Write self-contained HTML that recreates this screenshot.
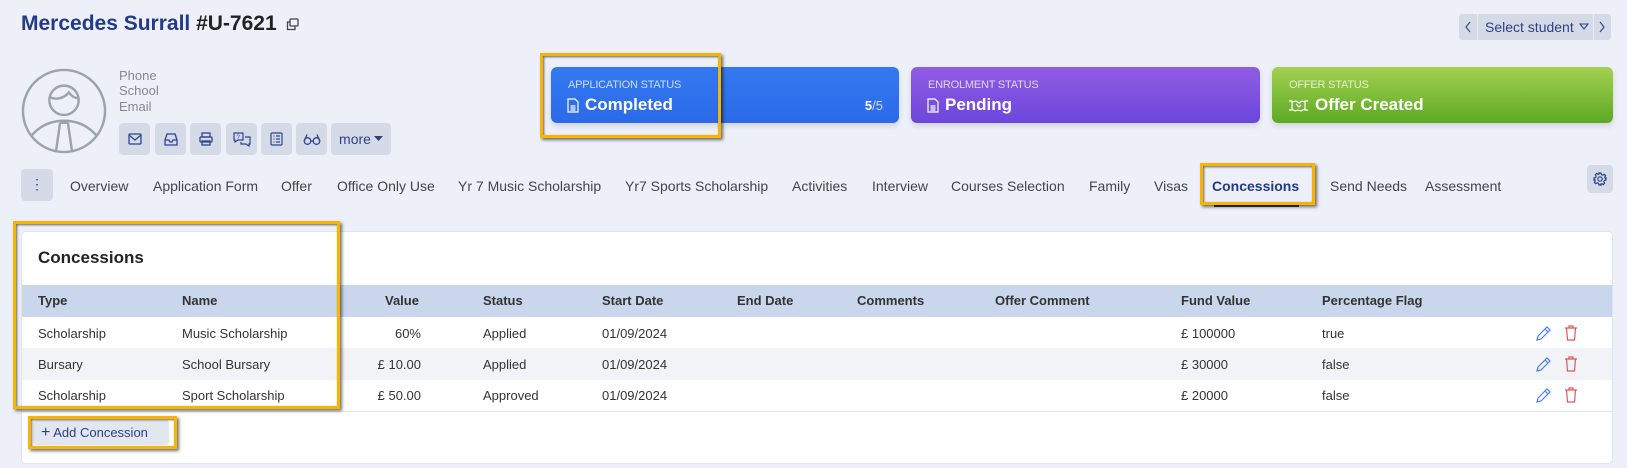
<!DOCTYPE html>
<html><head><meta charset="utf-8"><style>
*{box-sizing:border-box;margin:0;padding:0}
body{width:1627px;height:468px;background:#edf0f8;font-family:"Liberation Sans",Arial,sans-serif;position:relative;overflow:hidden;color:#333}
.a{position:absolute}
.title{left:21px;top:12px;font-size:21px;font-weight:bold;color:#233a86;white-space:nowrap}
.title span{color:#222}
.info{left:119px;font-size:13px;color:#888}
.btn{top:123px;height:32px;width:31px;background:#d5dbe6;border-radius:4px;display:flex;align-items:center;justify-content:center}
.card{top:67px;height:56px;border-radius:6px;color:#fff;box-shadow:0 3px 6px rgba(0,0,0,.12)}
.card .lab{position:absolute;top:12px;font-size:11px;opacity:.75;letter-spacing:-.2px}
.card .val{position:absolute;top:28px;font-size:17px;font-weight:bold;display:flex;align-items:center;gap:6px}
.tab{top:178px;font-size:14px;color:#444;white-space:nowrap}
.yb{border:3px solid #f8b400;box-shadow:2px 2px 3px rgba(0,0,0,.55),inset 1px 1px 2px rgba(0,0,0,.6)}
.th{top:293px;font-size:13px;font-weight:bold;color:#333}
.td{font-size:13px;color:#333;white-space:nowrap}
</style></head><body>
<div class="a title">Mercedes Surrall <span>#U-7621</span></div>
<svg class="a" style="left:286px;top:18px" width="13" height="13" viewBox="0 0 13 13" fill="none" stroke="#444" stroke-width="1.3"><rect x="4" y="1" width="8" height="7" rx="1"/><path d="M4 4H1.5v7.5H9V8"/></svg>

<div class="a" style="left:1459px;top:14px;width:152px;height:26px;background:#d5dbe6;border-radius:3px"></div>
<div class="a" style="left:1477px;top:14px;width:1px;height:26px;background:#e8ecf3"></div>
<div class="a" style="left:1593px;top:14px;width:1px;height:26px;background:#e8ecf3"></div>
<svg class="a" style="left:1464px;top:20px" width="8" height="14" viewBox="0 0 8 14"><path d="M6 2L2 7l4 5" fill="none" stroke="#3a4a8a" stroke-width="1.2"/></svg>
<svg class="a" style="left:1598px;top:20px" width="8" height="14" viewBox="0 0 8 14"><path d="M2 2l4 5-4 5" fill="none" stroke="#3a4a8a" stroke-width="1.2"/></svg>
<div class="a" style="left:1485px;top:19px;font-size:14px;color:#2f3f86">Select student</div>
<svg class="a" style="left:1579px;top:23px" width="10" height="8" viewBox="0 0 10 8"><path d="M1 1h8L5 6z" fill="none" stroke="#2f3f86" stroke-width="1.1"/></svg>

<svg class="a" style="left:21px;top:68px" width="86" height="86" viewBox="0 0 88 88" fill="none" stroke="#9ba3ad" stroke-width="2.5">
<circle cx="44" cy="44" r="42"/>
<circle cx="44" cy="33" r="15"/>
<path d="M30 30c6 3 14 1 19-5 3 4 6 6 10 6"/>
<path d="M10 70c10-12 22-16 34-16s24 4 34 16"/>
<path d="M40 56l-4 28M48 56l4 28M40 56h8"/>
</svg>
<div class="a info" style="top:68px">Phone</div>
<div class="a info" style="top:83px">School</div>
<div class="a info" style="top:99px">Email</div>

<div class="a btn" style="left:119px"><svg width="14" height="12" viewBox="0 0 14 12" fill="none" stroke="#2f4394" stroke-width="1.3"><rect x="1" y="1" width="12" height="10" rx="1"/><path d="M1 2l6 5 6-5"/></svg></div>
<div class="a btn" style="left:155px"><svg width="14" height="13" viewBox="0 0 14 13" fill="none" stroke="#2f4394" stroke-width="1.3"><path d="M3 1h8l2 6v5H1V7z"/><path d="M1 7h4l1 2h2l1-2h4"/></svg></div>
<div class="a btn" style="left:190px"><svg width="14" height="14" viewBox="0 0 14 14" fill="none" stroke="#2f4394" stroke-width="1.3"><rect x="3" y="1" width="8" height="4"/><rect x="1" y="5" width="12" height="5" rx="1"/><rect x="3" y="9" width="8" height="4"/></svg></div>
<div class="a btn" style="left:226px"><svg width="18" height="15" viewBox="0 0 18 15" fill="none" stroke="#2f4394" stroke-width="1.2"><path d="M1 1h9v7H5l-3 2V8H1z"/><path d="M12 5h5v7h-1v2l-3-2H8v-2"/><text x="3.5" y="7" font-size="6" fill="#2f4394" stroke="none" font-family="Liberation Sans">?</text></svg></div>
<div class="a btn" style="left:261px"><svg width="13" height="14" viewBox="0 0 13 14" fill="none" stroke="#2f4394" stroke-width="1.2"><rect x="1" y="1" width="11" height="12" rx="1"/><path d="M3.5 4h1M3.5 7h1M3.5 10h1M6 4h4M6 7h4M6 10h4"/></svg></div>
<div class="a btn" style="left:296px"><svg width="18" height="12" viewBox="0 0 18 12" fill="none" stroke="#2f4394" stroke-width="1.3"><circle cx="4.5" cy="8" r="3.3"/><circle cx="13.5" cy="8" r="3.3"/><path d="M7.8 8h2.4M1.2 8L4 1.5M16.8 8L14 1.5"/></svg></div>
<div class="a btn" style="left:331px;width:60px;font-size:14px;color:#2f3f86">more <svg width="9" height="6" viewBox="0 0 9 6" style="margin-left:3px"><path d="M0 0h9L4.5 5z" fill="#2f3f86"/></svg></div>

<div class="a card" style="left:551px;width:348px;background:linear-gradient(#3479f0,#2b6ae8)">
 <div class="lab" style="left:17px">APPLICATION STATUS</div>
 <div class="val" style="left:16px"><svg width="12" height="15" viewBox="0 0 12 15" fill="none" stroke="#fff" stroke-width="1.2"><path d="M1 1h7l3 3v10H1z"/><path d="M3.5 8h5M3.5 10h5M3.5 12h5"/></svg>Completed</div>
 <div class="a" style="right:16px;top:31px;font-size:13px"><b>5</b><span style="opacity:.75">/5</span></div>
</div>
<div class="a card" style="left:911px;width:349px;background:linear-gradient(#925ce3,#6c46dc)">
 <div class="lab" style="left:17px">ENROLMENT STATUS</div>
 <div class="val" style="left:16px"><svg width="12" height="15" viewBox="0 0 12 15" fill="none" stroke="#fff" stroke-width="1.2"><path d="M1 1h7l3 3v10H1z"/><path d="M3.5 8h5M3.5 10h5M3.5 12h5"/></svg>Pending</div>
</div>
<div class="a card" style="left:1272px;width:341px;background:linear-gradient(#a3d151,#5da923)">
 <div class="lab" style="left:17px">OFFER STATUS</div>
 <div class="val" style="left:16px"><svg width="21" height="13" viewBox="0 0 21 13" fill="none" stroke="#fff" stroke-width="1.2"><path d="M1 2h3v9H1M20 2h-3v9h3M4 3l4-1 3 2 3-2 3 1M4 10l3 2 3-1 3 1 4-2M8 5l3 3 2-2"/></svg>Offer Created</div>
</div>
<div class="a yb" style="left:540px;top:53px;width:181px;height:85px"></div>

<div class="a" style="left:21px;top:169px;width:32px;height:32px;background:#d5dbe6;border-radius:4px;color:#2f4394;font-size:14px;text-align:center;line-height:30px">⋮</div>
<div class="a tab" style="left:70px">Overview</div>
<div class="a tab" style="left:153px">Application Form</div>
<div class="a tab" style="left:281px">Offer</div>
<div class="a tab" style="left:337px">Office Only Use</div>
<div class="a tab" style="left:458px">Yr 7 Music Scholarship</div>
<div class="a tab" style="left:625px">Yr7 Sports Scholarship</div>
<div class="a tab" style="left:792px">Activities</div>
<div class="a tab" style="left:872px">Interview</div>
<div class="a tab" style="left:951px">Courses Selection</div>
<div class="a tab" style="left:1089px">Family</div>
<div class="a tab" style="left:1154px">Visas</div>
<div class="a tab" style="left:1212px;color:#233a86;font-weight:bold">Concessions</div>
<div class="a tab" style="left:1330px">Send Needs</div>
<div class="a tab" style="left:1425px">Assessment</div>
<div class="a" style="left:1214px;top:205px;width:85px;height:2px;background:#233a86"></div>
<div class="a yb" style="left:1200px;top:163px;width:115px;height:42px"></div>
<div class="a" style="left:1587px;top:165px;width:26px;height:28px;background:#d5dbe6;border-radius:4px;display:flex;align-items:center;justify-content:center"><svg width="14" height="14" viewBox="0 0 14 14" fill="none" stroke="#2f4394" stroke-width="1.2"><circle cx="7" cy="7" r="2.2"/><path d="M6 1h2l.4 1.6 1.4.6 1.4-.9 1.4 1.4-.9 1.4.6 1.4L13 6v2l-1.6.4-.6 1.4.9 1.4-1.4 1.4-1.4-.9-1.4.6L8 13H6l-.4-1.6-1.4-.6-1.4.9-1.4-1.4.9-1.4-.6-1.4L1 8V6l1.6-.4.6-1.4-.9-1.4 1.4-1.4 1.4.9 1.4-.6z"/></svg></div>

<div class="a" style="left:21px;top:231px;width:1592px;height:233px;background:#fff;border-radius:5px;border:1px solid #e0e4ec"></div>
<div class="a" style="left:38px;top:248px;font-size:17px;font-weight:bold;color:#222">Concessions</div>
<div class="a" style="left:22px;top:285px;width:1590px;height:32px;background:#c9d6eb"></div>
<div class="a" style="left:22px;top:348px;width:1590px;height:32px;background:#f2f3f7"></div>
<div class="a" style="left:22px;top:411px;width:1590px;height:1px;background:#e2e5eb"></div>
<div class="a th" style="left:38px">Type</div>
<div class="a th" style="left:182px">Name</div>
<div class="a th" style="left:385px">Value</div>
<div class="a th" style="left:483px">Status</div>
<div class="a th" style="left:602px">Start Date</div>
<div class="a th" style="left:737px">End Date</div>
<div class="a th" style="left:857px">Comments</div>
<div class="a th" style="left:995px">Offer Comment</div>
<div class="a th" style="left:1181px">Fund Value</div>
<div class="a th" style="left:1322px">Percentage Flag</div>

<div class="a td" style="left:38px;top:326px">Scholarship</div><div class="a td" style="left:182px;top:326px">Music Scholarship</div><div class="a td" style="left:321px;width:100px;text-align:right;top:326px">60%</div><div class="a td" style="left:483px;top:326px">Applied</div><div class="a td" style="left:602px;top:326px">01/09/2024</div><div class="a td" style="left:1181px;top:326px">£ 100000</div><div class="a td" style="left:1322px;top:326px">true</div>
<div class="a td" style="left:38px;top:357px">Bursary</div><div class="a td" style="left:182px;top:357px">School Bursary</div><div class="a td" style="left:321px;width:100px;text-align:right;top:357px">£ 10.00</div><div class="a td" style="left:483px;top:357px">Applied</div><div class="a td" style="left:602px;top:357px">01/09/2024</div><div class="a td" style="left:1181px;top:357px">£ 30000</div><div class="a td" style="left:1322px;top:357px">false</div>
<div class="a td" style="left:38px;top:388px">Scholarship</div><div class="a td" style="left:182px;top:388px">Sport Scholarship</div><div class="a td" style="left:321px;width:100px;text-align:right;top:388px">£ 50.00</div><div class="a td" style="left:483px;top:388px">Approved</div><div class="a td" style="left:602px;top:388px">01/09/2024</div><div class="a td" style="left:1181px;top:388px">£ 20000</div><div class="a td" style="left:1322px;top:388px">false</div>

<svg class="a" style="left:1535px;top:325px" width="16" height="78" viewBox="0 0 16 78" fill="none" stroke="#4a7df0" stroke-width="1.2">
<path d="M2 15l1-4 9-9 3 3-9 9z M10 4l3 3"/><path d="M2 46l1-4 9-9 3 3-9 9z M10 35l3 3"/><path d="M2 77l1-4 9-9 3 3-9 9z M10 66l3 3"/></svg>
<svg class="a" style="left:1564px;top:325px" width="14" height="78" viewBox="0 0 14 78" fill="none" stroke="#e0555a" stroke-width="1.2">
<path d="M1 3h12M5 3V1h4v2M2.5 3l1 12h7l1-12"/><path d="M1 34h12M5 34v-2h4v2M2.5 34l1 12h7l1-12"/><path d="M1 65h12M5 65v-2h4v2M2.5 65l1 12h7l1-12"/></svg>
<div class="a yb" style="left:13px;top:221px;width:327px;height:188px"></div>

<div class="a" style="left:33px;top:420px;width:136px;height:25px;background:#e1e6ef;border-radius:3px;font-size:13px;color:#2f3f86;line-height:25px;padding-left:8px"><span style="font-size:16px">+</span> Add Concession</div>
<div class="a yb" style="left:28px;top:416px;width:149px;height:33px"></div>
</body></html>
